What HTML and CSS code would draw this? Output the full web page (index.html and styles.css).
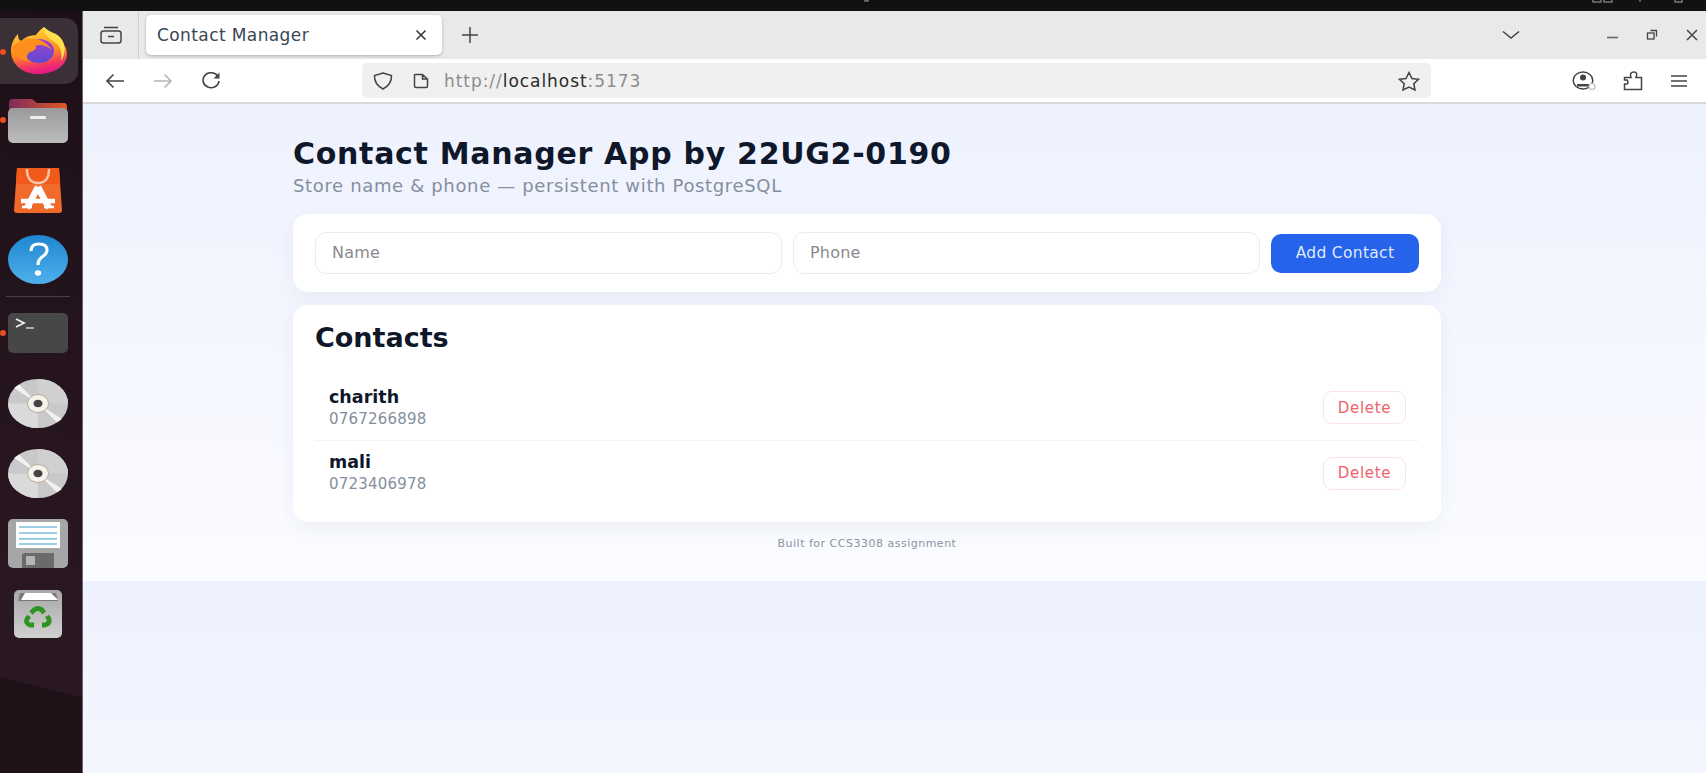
FILE: index.html
```html
<!DOCTYPE html>
<html lang="en">
<head>
<meta charset="utf-8">
<title>Contact Manager</title>
<link rel="stylesheet" href="styles.css">
</head>
<body>
<div class="topbar">
  <svg class="tray" width="986" height="3" viewBox="700 0 986 3"><path d="M865 0v1h3V0M1593 0v2h8V0M1604 0v2h8V0M1640 0v2M1675 0v2h7V0" fill="none" stroke="#777" stroke-width="1.500"/></svg>
</div>
<div class="desktop">
  <nav class="dock">
    <div class="tile">
      <span class="dot dot-ff"></span>
      <svg width="58" height="50" viewBox="0 0 58 50">
        <defs>
          <linearGradient id="ffa" x1="0.3" y1="0" x2="0.5" y2="1"><stop offset="0" stop-color="#ffd93c"/><stop offset=".55" stop-color="#ff8a1f"/><stop offset=".85" stop-color="#f0306a"/><stop offset="1" stop-color="#e6168c"/></linearGradient>
          <linearGradient id="ffb" x1="0" y1="0" x2="0" y2="1"><stop offset="0" stop-color="#a83fc8"/><stop offset="1" stop-color="#5a4ad6"/></linearGradient>
        </defs>
        <path d="M28 48C12 48 1 38 1 25C1 18 4 12 8 8C8 12 9 14 11 15C15 11 20 9 26 9C29 5 31 3 34 1C34 5 38 7 44 11C52 15 57 20 57 28C57 40 44 48 28 48Z" fill="url(#ffa)"/>
        <path d="M34 1C33 5 36 11 43 15C50 19 53 26 51 35C57 26 56 14 46 8C41 6 37 4 34 1Z" fill="#ffe04a"/>
        <ellipse cx="29" cy="25" rx="15" ry="12" fill="url(#ffb)"/>
        <path d="M2 22C8 14 18 11 26 13C32 14 38 18 42 24C36 19 30 18 25 20C28 22 24 25 20 26C15 29 17 34 20 36C10 34 4 29 2 22Z" fill="#ff8f1c"/>
      </svg>
    </div>

    <div class="slot slot-folder">
      <span class="dot dot-f"></span>
      <svg width="60" height="44" viewBox="0 0 60 44">
        <defs><linearGradient id="fold" x1="0" y1="0" x2="1" y2="0"><stop offset="0" stop-color="#7e2a5c"/><stop offset="1" stop-color="#e2591f"/></linearGradient>
        <linearGradient id="foldb" x1="0" y1="0" x2="0" y2="1"><stop offset="0" stop-color="#9a9a9a"/><stop offset="1" stop-color="#bcbcbc"/></linearGradient></defs>
        <path d="M1 8V4Q1 0 5 0H24L29 4H56Q59 4 59 8V14H1Z" fill="url(#fold)"/>
        <rect x="0" y="9" width="60" height="35" rx="5" fill="url(#foldb)"/>
        <rect x="22" y="17" width="16" height="3" rx="1" fill="#eee"/>
      </svg>
    </div>

    <div class="slot slot-store">
      <svg width="48" height="45" viewBox="0 0 48 45">
        <path d="M3 0H45L48 42Q48 45 45 45H3Q0 45 0 42Z" fill="#f06a2c"/>
        <path d="M3 0H45L46 16H2Z" fill="#f15a1b"/>
        <path d="M13 1Q13 15 24 15Q35 15 35 1" fill="none" stroke="#f3c5ad" stroke-width="2.400"/>
        <path d="M24 19L13 40M24 19L35 40" stroke="#fff" stroke-width="6.500" fill="none"/>
        <path d="M7 33H41" stroke="#fff" stroke-width="4.500" fill="none"/>
        <path d="M8 39H18M30 39H40" stroke="#fff" stroke-width="2.500" fill="none"/>
      </svg>
    </div>

    <div class="slot slot-help">
      <svg width="60" height="49" viewBox="0 0 60 49">
        <defs><linearGradient id="hlp" x1="0" y1="0" x2="0" y2="1"><stop offset="0" stop-color="#1f86d2"/><stop offset="1" stop-color="#4fb0ea"/></linearGradient></defs>
        <ellipse cx="30" cy="24.500" rx="30" ry="24.500" fill="url(#hlp)"/>
        <path d="M23 16Q23 9 31 9Q39 9 39 15Q39 19 34 22Q30 25 30 30" fill="none" stroke="#fff" stroke-width="3.200"/>
        <ellipse cx="30" cy="38" rx="3.200" ry="2.800" fill="#fff"/>
      </svg>
    </div>

    <div class="dock-sep"></div>

    <div class="slot slot-term">
      <span class="dot dot-t"></span>
      <svg width="60" height="40" viewBox="0 0 60 40">
        <rect width="60" height="40" rx="5" fill="#474747"/>
        <path d="M8 6L16 10L8 14" fill="none" stroke="#eee" stroke-width="1.800"/>
        <path d="M18 15H26" stroke="#bbb" stroke-width="1.800"/>
      </svg>
    </div>

    <div class="slot slot-disc1">
      <svg width="60" height="49" viewBox="0 0 60 49">
        <ellipse cx="30" cy="24.500" rx="30" ry="24.500" fill="#c9c9c9"/>
        <path d="M30 24.500L30 0A30 24.500 0 0 1 60 24.500Z" fill="#d0d0d0"/>
        <path d="M30 24.500L30 49A30 24.500 0 0 1 0 24.500Z" fill="#dadada"/>
        <path d="M30 24.500L6 9L11 5.500Z" fill="#f2f2f2"/>
        <path d="M30 24.500L54 40L49 43.500Z" fill="#f2f2f2"/>
        <ellipse cx="30" cy="24.500" rx="10.500" ry="9" fill="#f6f3ec" stroke="#b9ac97"/>
        <ellipse cx="30" cy="24.500" rx="4.500" ry="3.800" fill="#444"/>
      </svg>
    </div>

    <div class="slot slot-disc2">
      <svg width="60" height="49" viewBox="0 0 60 49">
        <ellipse cx="30" cy="24.500" rx="30" ry="24.500" fill="#c9c9c9"/>
        <path d="M30 24.500L30 0A30 24.500 0 0 1 60 24.500Z" fill="#d0d0d0"/>
        <path d="M30 24.500L30 49A30 24.500 0 0 1 0 24.500Z" fill="#dadada"/>
        <path d="M30 24.500L6 9L11 5.500Z" fill="#f2f2f2"/>
        <path d="M30 24.500L54 40L49 43.500Z" fill="#f2f2f2"/>
        <ellipse cx="30" cy="24.500" rx="10.500" ry="9" fill="#f6f3ec" stroke="#b9ac97"/>
        <ellipse cx="30" cy="24.500" rx="4.500" ry="3.800" fill="#444"/>
      </svg>
    </div>

    <div class="slot slot-floppy">
      <svg width="60" height="49" viewBox="0 0 60 49">
        <rect width="60" height="49" rx="5" fill="#a6a6a6"/>
        <rect x="8" y="3" width="44" height="26" fill="#fff"/>
        <path d="M11 8H49M11 14H49M11 20H49M11 25H49" stroke="#3d9bc9" stroke-width="1.200"/>
        <path d="M14 49V37Q14 34 17 34H46V49Z" fill="#6b6b6b"/>
        <rect x="18" y="37" width="9" height="9" fill="#b5b5b5"/>
      </svg>
    </div>

    <div class="slot slot-trash">
      <svg width="48" height="48" viewBox="0 0 48 48">
        <defs><linearGradient id="tr" x1="0" y1="0" x2="0" y2="1"><stop offset="0" stop-color="#a8a8a8"/><stop offset="1" stop-color="#d0d0d0"/></linearGradient></defs>
        <rect width="48" height="48" rx="5" fill="url(#tr)"/>
        <path d="M6 3H42L44 11H4Z" fill="#7a7a7a"/>
        <path d="M11 3H37L44 10H7Z" fill="#fff"/>
        <g fill="none" stroke="#2d9323" stroke-width="4.800">
          <path d="M17 23L20 20Q24 17 28 20L30 23"/>
          <path d="M33 26L35 29Q36 34 31 35H28"/>
          <path d="M20 35H16Q11 33 13 29L15 26"/>
        </g>
      </svg>
    </div>
  </nav>

  <div class="browser">
    <header class="tabbar">
      <div class="tabs-btn">
        <svg width="22" height="18" viewBox="0 0 22 18"><g fill="none" stroke="#444" stroke-width="1.500"><rect x="1" y="5" width="20" height="12" rx="2.500"/><path d="M4 1.500H18M8 10.500H14"/></g></svg>
      </div>
      <div class="tab">
        <span class="tab-title">Contact Manager</span>
        <svg width="12" height="12" viewBox="0 0 12 12"><path d="M1.500 1.500L10.500 10.500M10.500 1.500L1.500 10.500" stroke="#333" stroke-width="1.500"/></svg>
      </div>
      <svg class="new-tab" width="16" height="16" viewBox="0 0 16 16"><path d="M8 0V16M0 8H16" stroke="#444" stroke-width="1.500"/></svg>
      <div class="tabbar-right">
        <svg width="18" height="10" viewBox="0 0 18 10"><path d="M1 1.500L9 8L17 1.500" fill="none" stroke="#444" stroke-width="1.500"/></svg>
        <div class="winctl">
          <svg width="12" height="12" viewBox="0 0 12 12"><path d="M1 8.500H12" stroke="#666" stroke-width="1.600"/></svg>
          <svg width="12" height="12" viewBox="0 0 12 12"><g fill="none" stroke="#444" stroke-width="1.300"><rect x="1.500" y="4" width="6.500" height="6"/><path d="M4.500 1.500H10.500V7.500"/></g></svg>
          <svg width="12" height="12" viewBox="0 0 12 12"><path d="M1 1L11 11M11 1L1 11" stroke="#444" stroke-width="1.500"/></svg>
        </div>
      </div>
    </header>
    <div class="navbar">
      <div class="nav-btns">
        <svg width="20" height="16" viewBox="0 0 20 16"><path d="M19 8H2M8.500 1.500L2 8L8.500 14.500" fill="none" stroke="#444" stroke-width="1.600"/></svg>
        <svg width="20" height="16" viewBox="0 0 20 16"><path d="M1 8H18M11.500 1.500L18 8L11.500 14.500" fill="none" stroke="#b5b5b5" stroke-width="1.600"/></svg>
        <svg width="20" height="18" viewBox="0 0 20 18"><path d="M17 4.500A8 7.500 0 1 0 18 9" fill="none" stroke="#444" stroke-width="1.600"/><path d="M18.500 0.500V6.500H12.500Z" fill="#444"/></svg>
      </div>
      <div class="urlbar">
        <svg width="20" height="18" viewBox="0 0 20 18"><path d="M10 1L18.500 3.500Q19 12 10 17Q1 12 1.500 3.500Z" fill="none" stroke="#444" stroke-width="1.500"/></svg>
        <svg width="16" height="16" viewBox="0 0 16 16"><path d="M2 1.500H9.500L14.500 6V13Q14.500 14.500 13 14.500H3Q1.500 14.500 1.500 13V2ZM9.500 1.500V6H14.500" fill="none" stroke="#444" stroke-width="1.500"/></svg>
        <span class="url"><span class="url-dim">http://</span>localhost<span class="url-dim">:5173</span></span>
        <svg class="star" width="22" height="20" viewBox="0 0 22 20"><path d="M11 1.500L14 7.500L20.500 8.300L15.800 12.700L17 19L11 16L5 19L6.200 12.700L1.500 8.300L8 7.500Z" fill="none" stroke="#444" stroke-width="1.500"/></svg>
      </div>
      <div class="nav-right">
        <svg width="24" height="20" viewBox="0 0 24 20"><ellipse cx="11" cy="9.500" rx="9.800" ry="8.500" fill="none" stroke="#444" stroke-width="1.500"/><circle cx="11" cy="6.500" r="3" fill="#444"/><path d="M5 13H17V15.500H5Z" fill="#444"/><circle cx="20" cy="15.500" r="3" fill="#fff" stroke="#bbb" stroke-width="1.200"/></svg>
        <svg width="20" height="20" viewBox="0 0 20 20"><path d="M1.500 18.500V13H4Q6 12 4 9H1.500V6.500H8Q6 1 11 1Q15 1 13 6.500H18.500V18.500Z" fill="none" stroke="#444" stroke-width="1.500"/></svg>
        <svg width="18" height="14" viewBox="0 0 18 14"><path d="M1 2H17M1 7H17M1 12H17" stroke="#444" stroke-width="1.500"/></svg>
      </div>
    </div>
    <div class="page">
      <main class="app">
        <h1 class="title">Contact Manager App by 22UG2-0190</h1>
        <p class="subtitle">Store name &amp; phone — persistent with PostgreSQL</p>
        <form class="card form-card">
          <input class="field" type="text" placeholder="Name">
          <input class="field" type="text" placeholder="Phone">
          <button class="add-btn" type="button">Add Contact</button>
        </form>
        <section class="card list-card">
          <h2 class="list-title">Contacts</h2>
          <ul class="list">
            <li class="row">
              <div class="person"><div class="name">charith</div><div class="phone">0767266898</div></div>
              <button class="del-btn" type="button">Delete</button>
            </li>
            <li class="row">
              <div class="person"><div class="name">mali</div><div class="phone">0723406978</div></div>
              <button class="del-btn" type="button">Delete</button>
            </li>
          </ul>
        </section>
        <footer class="foot">Built for CCS3308 assignment</footer>
      </main>
    </div>
  </div>
</div>
</body>
</html>
```

FILE: styles.css
```css
* { box-sizing: border-box; }
html, body { margin: 0; height: 100%; overflow: hidden; }
body {
  font-family: "DejaVu Sans", "Noto Sans", sans-serif;
  display: flex;
  flex-direction: column;
  width: 1706px;
  height: 773px;
  background: #111;
}
.topbar { height: 11px; background: #111; display: flex; justify-content: flex-end; padding-right: 20px; flex: none; }
.tray { display: block; }
.desktop { display: flex; flex: 1; min-height: 0; }

.dock {
  width: 83px;
  flex: none;
  border-right: 1px solid #6d6469;
  background: linear-gradient(194deg, #1d0f17 0, #26151f 55%, #2a1822 87.600%, #1f1118 87.800%, #1f1118 100%);
  display: flex;
  flex-direction: column;
  align-items: stretch;
  padding-top: 7px;
  position: relative;
}
.tile {
  width: 78px;
  height: 66px;
  background: #3b3036;
  border-radius: 0 13px 13px 0;
  display: flex;
  align-items: center;
  justify-content: center;
  position: relative;
}
.slot { display: flex; justify-content: center; position: relative; padding-right: 6px; }
.slot svg, .tile svg { display: block; }
.slot-folder { margin-top: 15px; }
.slot-store { margin-top: 25px; }
.slot-help { margin-top: 22px; }
.slot-term { margin-top: 16px; }
.slot-disc1 { margin-top: 26px; }
.slot-disc2 { margin-top: 21px; }
.slot-floppy { margin-top: 21px; }
.slot-trash { margin-top: 22px; }
.dock-sep { height: 1px; background: #4a3e45; margin: 12px 12px 0 6px; }
.dot { position: absolute; width: 6px; height: 6px; border-radius: 50%; background: #e9501f; left: 0; }
.dot-ff { top: 31px; }
.dot-f { top: 18px; }
.dot-t { top: 17px; }

.browser { flex: 1; display: flex; flex-direction: column; min-width: 0; }
.tabbar {
  height: 48px;
  flex: none;
  background: #e9e9e9;
  display: flex;
  align-items: center;
}
.tabs-btn {
  width: 56px;
  height: 100%;
  border-right: 1px solid #cfcfcf;
  display: flex;
  align-items: center;
  justify-content: center;
}
.tab {
  margin-left: 7px;
  width: 296px;
  height: 40px;
  background: #fff;
  border-radius: 5px;
  box-shadow: 0 1px 3px rgba(0,0,0,.25);
  display: flex;
  align-items: center;
  justify-content: space-between;
  padding: 0 15px 0 11px;
}
.tab-title { font-size: 17px; letter-spacing: .4px; color: #3a4654; }
.new-tab { margin-left: 20px; }
.tabbar-right { margin-left: auto; display: flex; align-items: center; padding-right: 8px; }
.winctl { display: flex; align-items: center; gap: 28px; margin-left: 86px; }

.navbar {
  height: 45px;
  flex: none;
  background: #fff;
  border-bottom: 2px solid #d8d8d8;
  display: flex;
  align-items: center;
}
.nav-btns { display: flex; align-items: center; gap: 28px; padding-left: 22px; width: 279px; }
.urlbar {
  width: 1069px;
  height: 35px;
  background: #f0f0f0;
  border-radius: 5px;
  display: flex;
  align-items: center;
  padding: 0 11px;
  gap: 20px;
}
.url { font-size: 17px; letter-spacing: .95px; color: #2a2a2a; margin-left: -5px; }
.url-dim { color: #8d8d8d; }
.star { margin-left: auto; }
.nav-right { display: flex; align-items: center; gap: 27px; margin-left: 141px; }

.page {
  flex: 1;
  min-height: 0;
  background: linear-gradient(180deg, #eef2fe 0, #fbfcff 100%) 0 0 / 100% 477px repeat;
  padding-left: 210px;
}
.app { width: 1148px; padding-top: 32px; display: flex; flex-direction: column; }
.title { margin: 0; font-size: 30px; line-height: 36px; font-weight: 700; letter-spacing: .7px; color: #0f172a; }
.subtitle { margin: 0 0 14px; font-size: 18px; line-height: 28px; letter-spacing: .65px; color: #858e9e; }
.card { background: #fff; border-radius: 15px; box-shadow: 0 6px 20px rgba(30,50,120,.06); }
.form-card { height: 78px; padding: 0 22px; display: flex; align-items: center; gap: 11px; }
.field {
  flex: 1;
  min-width: 0;
  height: 42px;
  border: 1px solid #e6edf7;
  border-radius: 11px;
  padding: 0 16px 2px;
  font: 16px "DejaVu Sans", "Noto Sans", sans-serif;
  letter-spacing: .2px;
  color: #222;
  background: #fff;
  outline: none;
}
.field::placeholder { color: #8a8a8a; opacity: 1; }
.add-btn {
  width: 148px;
  height: 39px;
  flex: none;
  border: 0;
  border-radius: 10px;
  background: #2563eb;
  color: #dfe8fd;
  font: 15.500px "DejaVu Sans", "Noto Sans", sans-serif;
  letter-spacing: .3px;
}
.list-card { margin-top: 13px; height: 217px; padding: 16px 22px 0; }
.list-title { margin: 0; font-size: 27px; line-height: 34px; font-weight: 700; color: #0f172a; }
.list { list-style: none; margin: 20px 0 0; padding: 0; }
.row {
  height: 65px;
  display: flex;
  align-items: center;
  justify-content: space-between;
  padding: 0 13px 0 14px;
}
.row + .row { border-top: 1px solid #f1f5f9; }
.name { font-size: 17.500px; line-height: 22px; font-weight: 700; color: #0f172a; }
.phone { font-size: 15px; line-height: 22px; letter-spacing: .2px; color: #858e9e; }
.del-btn {
  width: 83px;
  height: 33px;
  background: #fff;
  border: 1px solid #fde3e3;
  border-radius: 9px;
  color: #f0626a;
  font: 15px "DejaVu Sans", "Noto Sans", sans-serif;
  letter-spacing: .7px;
}
.foot { margin-top: 15px; text-align: center; font-size: 11px; line-height: 14px; letter-spacing: .5px; color: #8b93a3; }
```
